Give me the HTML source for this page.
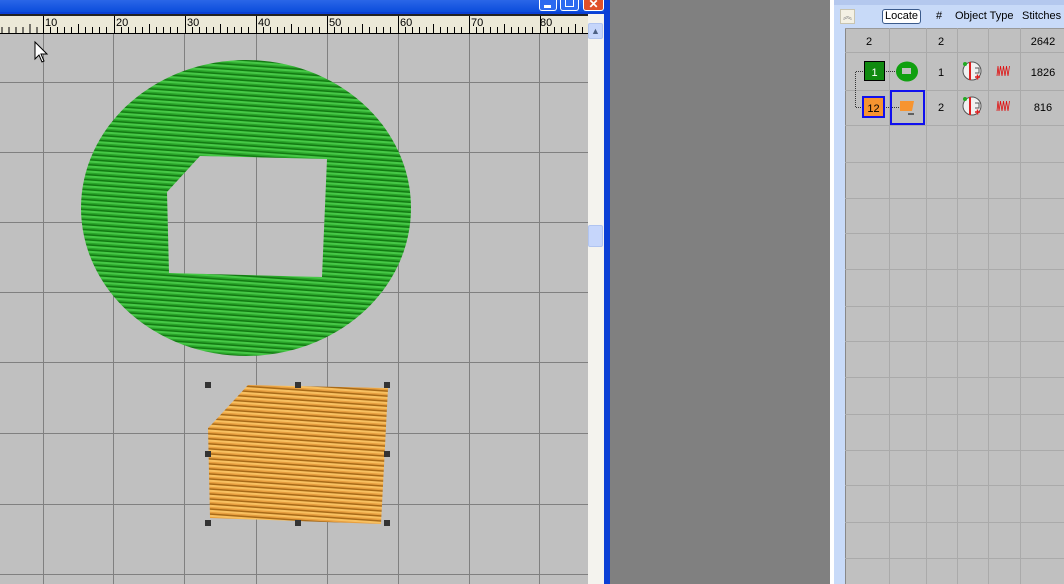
<!DOCTYPE html>
<html><head><meta charset="utf-8"><style>
*{margin:0;padding:0;box-sizing:border-box}
body{width:1064px;height:584px;overflow:hidden;background:#808080;position:relative;font-family:"Liberation Sans",sans-serif}
.abs{position:absolute}
</style></head><body>
<div class="abs" style="left:0;top:0;width:610px;height:584px;background:#0a3fd6"></div>
<div class="abs" style="left:0;top:0;width:604px;height:12px;background:linear-gradient(#2a66e8,#0b4ddc)"></div>
<div class="abs" style="left:539px;top:0;width:18px;height:11px;background:#2c6af0;border:1px solid #fff;border-top:none;border-radius:0 0 3px 3px"><div class="abs" style="left:4px;top:5px;width:7px;height:3px;background:#fff"></div></div>
<div class="abs" style="left:560px;top:0;width:19px;height:11px;background:#2c6af0;border:1px solid #fff;border-top:none;border-radius:0 0 3px 3px"><div class="abs" style="left:4px;top:0;width:9px;height:7px;border:1px solid #fff;border-top:none"></div></div>
<div class="abs" style="left:583px;top:0;width:21px;height:11px;background:#e0502a;border:1px solid #fff;border-top:none;border-radius:0 0 3px 3px;color:#fff;font-size:12px;line-height:8px;text-align:center;font-weight:bold">✕</div>
<div class="abs" style="left:0;top:14px;width:588px;height:20px;background:#ece9d8;border-top:2px solid #222;border-bottom:1px solid #000"></div>
<svg class="abs" style="left:0;top:14px" width="588" height="20">
<g stroke="#000" stroke-width="1">
<path d="M2 19V13M9 19V13M16 19V13M23 19V13M30 19V10M37 19V13"/>
<g id="t"><path d="M43.5 2V19M50.5 19V13M57.5 19V13M64.5 19V13M71.5 19V13M78.5 19V10M85.5 19V13M92.5 19V13M99.5 19V13M106.5 19V13"/></g>
<use href="#t" x="71"/><use href="#t" x="142"/><use href="#t" x="213"/><use href="#t" x="284"/><use href="#t" x="355"/><use href="#t" x="426"/><use href="#t" x="497"/>
</g>
<g font-size="11" fill="#000" font-family="Liberation Sans">
<text x="45" y="12">10</text><text x="116" y="12">20</text><text x="187" y="12">30</text><text x="258" y="12">40</text><text x="329" y="12">50</text><text x="400" y="12">60</text><text x="471" y="12">70</text><text x="540" y="12">80</text></g>
</svg>
<div class="abs" style="left:588px;top:14px;width:16px;height:570px;background:#f4f3ee"></div>
<div class="abs" style="left:588px;top:23px;width:15px;height:16px;background:#c6d6fb;border:1px solid #b0c4f0;border-radius:2px;color:#4d6185;font-size:9px;text-align:center;line-height:14px">▲</div>
<div class="abs" style="left:588px;top:225px;width:15px;height:22px;background:#c6d6fb;border:1px solid #b0c4f0;border-radius:2px"></div>
<svg class="abs" style="left:0;top:34px" width="588" height="550">
<defs>
<pattern id="gp" width="12" height="5" patternUnits="userSpaceOnUse" patternTransform="rotate(4)">
<rect width="12" height="5" fill="#2aa52a"/><rect y="0" width="12" height="2" fill="#46c846"/><rect y="3.5" width="12" height="1.5" fill="#137a13"/></pattern>
<pattern id="op" width="12" height="5" patternUnits="userSpaceOnUse" patternTransform="rotate(4)">
<rect width="12" height="5" fill="#e8a040"/><rect y="0" width="12" height="2" fill="#f8c060"/><rect y="3.5" width="12" height="1.5" fill="#a86a18"/></pattern>
</defs>
<rect width="588" height="550" fill="#c0c0c0"/>
<g stroke="#808080" stroke-width="1">
<path d="M43.5 0V550M113.5 0V550M184.5 0V550M256.5 0V550M327.5 0V550M398.5 0V550M469.5 0V550M539.5 0V550"/>
<path d="M0 48.5H588M0 118.5H588M0 188.5H588M0 258.5H588M0 328.5H588M0 399.5H588M0 470.5H588M0 540.5H588"/>
</g>
<path fill-rule="evenodd" fill="url(#gp)" d="M81 174a165 148 0 1 0 330 0a165 148 0 1 0 -330 0Z M200 122L327 125L322 243L169 239L167 158Z"/>
<path fill="url(#op)" d="M248 351L388 354L381 490L210 484L208 394L212 390Z"/>
<g fill="#333">
<rect x="205" y="348" width="6" height="6"/><rect x="295" y="348" width="6" height="6"/><rect x="384" y="348" width="6" height="6"/>
<rect x="205" y="417" width="6" height="6"/><rect x="384" y="417" width="6" height="6"/>
<rect x="205" y="486" width="6" height="6"/><rect x="295" y="486" width="6" height="6"/><rect x="384" y="486" width="6" height="6"/></g>
<path d="M35 8V25L39 21L42 28L44 27L41 20L47 20Z" fill="#fff" stroke="#000" stroke-width="1"/>
</svg>
<div class="abs" style="left:830px;top:0;width:234px;height:584px;background:#c8daf8;border-left:4px solid #fff"></div>
<div class="abs" style="left:834px;top:0;width:230px;height:5px;background:#b4c8ee"></div>
<div class="abs" style="left:840px;top:9px;width:15px;height:15px;background:#f4f1e4;border:1px solid #c8c4b0;font-size:9px;color:#888;text-align:center;line-height:13px">︽</div>
<div class="abs" style="left:882px;top:9px;width:39px;height:15px;background:#fff;border:1px solid #3b5b8c;border-radius:3px;font-size:11px;text-align:center;line-height:13px">Locate</div>
<div class="abs" style="left:936px;top:10px;font-size:11px">#</div>
<div class="abs" style="left:955px;top:10px;font-size:11px">Object Type</div>
<div class="abs" style="left:1022px;top:10px;font-size:11px">Stitches</div>
<svg class="abs" style="left:845px;top:28px" width="219" height="556">
<rect width="219" height="556" fill="#c0c0c0"/>
<path d="M0.5 0V556" stroke="#888"/>
<path d="M0 0.5H219" stroke="#999"/>
<g stroke="#aaa">
<path d="M44.5 0V556M81.5 0V556M112.5 0V556M143.5 0V556M175.5 0V556"/>
<path d="M0 24.5H219M0 62.5H219M0 97.5H219M0 134.5H219M0 170.5H219M0 205.5H219M0 241.5H219M0 278.5H219M0 313.5H219M0 349.5H219M0 386.5H219M0 422.5H219M0 457.5H219M0 494.5H219M0 530.5H219"/>
</g>
<g font-size="11" font-family="Liberation Sans" text-anchor="middle" fill="#000">
<text x="24" y="17">2</text><text x="96" y="17">2</text><text x="198" y="17">2642</text>
<text x="96" y="48">1</text><text x="198" y="48">1826</text>
<text x="96" y="83">2</text><text x="198" y="83">816</text>
</g>
<path d="M28 43.5H10.5V79.5H19" stroke="#333" stroke-dasharray="1 1" fill="none"/>
<path d="M39 43.5H55M39 79.5H55" stroke="#333" stroke-dasharray="1 1"/>
<rect x="19.5" y="33.5" width="20" height="19" fill="#108a10" stroke="#000"/>
<text x="29.5" y="48" font-size="11" fill="#fff" text-anchor="middle" font-family="Liberation Sans">1</text>
<rect x="18" y="69" width="21" height="20" fill="#f79430" stroke="#1010ee" stroke-width="2"/>
<text x="28.5" y="84" font-size="11" fill="#000" text-anchor="middle" font-family="Liberation Sans">12</text>
<ellipse cx="62" cy="43.5" rx="11" ry="10" fill="#10a010"/><rect x="57" y="40" width="9" height="6" fill="#c0c0c0"/>
<rect x="46" y="63" width="33" height="33" fill="none" stroke="#1010ee" stroke-width="2"/>
<path d="M55 73H69L67 83H55Z" fill="#f79430"/><path d="M63 86H69" stroke="#000"/>
<g id="ic"><circle cx="127" cy="43" r="9" fill="#f0f0f0" stroke="#555"/><path d="M125 34V52" stroke="#e02020" stroke-width="2"/><path d="M130 40h4v5h-4" fill="none" stroke="#555"/><path d="M130 49h5M132.5 46.5v5" stroke="#e02020" stroke-width="1.5"/><circle cx="120" cy="36" r="2" fill="#2a2"/></g>
<use href="#ic" y="35"/>
<g id="st" stroke="#e01010" stroke-width="0.8" fill="none"><path d="M152 48L153 38L154 48L155.5 38L157 48L158.5 38L160 48L161.5 38L163 48L164.5 38"/></g>
<use href="#st" y="35"/>
</svg>
</body></html>
